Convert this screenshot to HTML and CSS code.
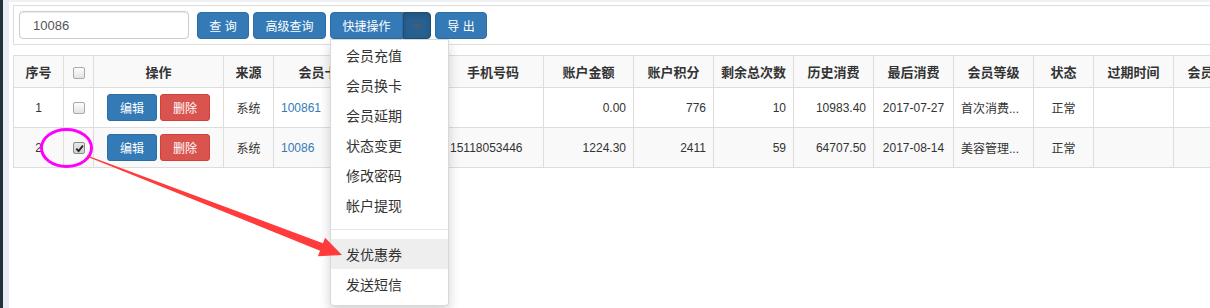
FILE: index.html
```html
<!DOCTYPE html>
<html lang="zh-CN">
<head>
<meta charset="utf-8">
<title>会员列表</title>
<link rel="stylesheet" href="styles.css">
</head>
<body>
<div class="app">
  <div class="rail"></div>
  <div class="gutter"></div>
  <div class="main">
    <div class="toolbar">
      <input class="search" type="text" value="10086">
      <button class="btn btn-primary w52">查&nbsp;询</button>
      <button class="btn btn-primary w73">高级查询</button>
      <div class="btn-group">
        <button class="btn btn-primary w73 left">快捷操作</button>
        <button class="btn btn-primary caret-btn"><span class="caret"></span></button>
        <ul class="dropdown">
          <li>会员充值</li>
          <li>会员换卡</li>
          <li>会员延期</li>
          <li>状态变更</li>
          <li>修改密码</li>
          <li>帐户提现</li>
          <li class="divider"></li>
          <li class="hover">发优惠券</li>
          <li>发送短信</li>
        </ul>
      </div>
      <button class="btn btn-primary w52">导&nbsp;出</button>
    </div>
    <table class="grid">
      <colgroup>
        <col class="c50"><col class="c30"><col class="c130"><col class="c50"><col class="c102"><col class="c67"><col class="c101"><col class="c90"><col class="c80"><col class="c80"><col class="c80"><col class="c80"><col class="c80"><col class="c60"><col class="c80"><col class="c80">
      </colgroup>
      <thead>
        <tr class="head">
          <th>序号</th>
          <th><span class="cb"></span></th>
          <th>操作</th>
          <th>来源</th>
          <th>会员卡号</th>
          <th></th>
          <th>手机号码</th>
          <th>账户金额</th>
          <th>账户积分</th>
          <th>剩余总次数</th>
          <th>历史消费</th>
          <th>最后消费</th>
          <th>会员等级</th>
          <th>状态</th>
          <th>过期时间</th>
          <th>会员备注</th>
        </tr>
      </thead>
      <tbody>
        <tr class="row">
          <td class="ctr">1</td>
          <td class="ctr"><span class="cb"></span></td>
          <td class="ctr"><span class="ops"><button class="sbtn btn-primary">编辑</button><button class="sbtn btn-danger">删除</button></span></td>
          <td class="ctr">系统</td>
          <td><span class="link">100861</span></td>
          <td></td>
          <td></td>
          <td class="num">0.00</td>
          <td class="num">776</td>
          <td class="num">10</td>
          <td class="num">10983.40</td>
          <td class="ctr">2017-07-27</td>
          <td>首次消费...</td>
          <td class="ctr">正常</td>
          <td></td>
          <td></td>
        </tr>
        <tr class="row alt">
          <td class="ctr">2</td>
          <td class="ctr"><span class="cb checked"><svg viewBox="0 0 10 10" width="9" height="9"><path d="M1.5 5.2 L4 7.8 L8.8 1.8" fill="none" stroke="#222" stroke-width="2"/></svg></span></td>
          <td class="ctr"><span class="ops"><button class="sbtn btn-primary">编辑</button><button class="sbtn btn-danger">删除</button></span></td>
          <td class="ctr">系统</td>
          <td><span class="link">10086</span></td>
          <td></td>
          <td>15118053446</td>
          <td class="num">1224.30</td>
          <td class="num">2411</td>
          <td class="num">59</td>
          <td class="num">64707.50</td>
          <td class="ctr">2017-08-14</td>
          <td>美容管理...</td>
          <td class="ctr">正常</td>
          <td></td>
          <td></td>
        </tr>
      </tbody>
    </table>
  </div>
  <svg class="annot" width="1210" height="308" viewBox="0 0 1210 308">
    <ellipse cx="66.5" cy="148" rx="25" ry="18.5" fill="none" stroke="#ff00ff" stroke-width="3"/>
    <polygon fill="#ff3b3b" points="86.8,156.6 320.05,250.7 317.9,256.3 342,255 325.1,237.7 322.95,243.3 87.2,155.4"/>
  </svg>
</div>
</body>
</html>
```

FILE: styles.css
```css
* { box-sizing: border-box; }
html, body { margin: 0; padding: 0; }
body {
  width: 1210px;
  height: 308px;
  overflow: hidden;
  background: #fff;
  font-family: "Liberation Sans", "Noto Sans CJK SC", sans-serif;
  font-size: 12px;
  color: #333;
}
.app {
  position: relative;
  display: flex;
  width: 1210px;
  height: 308px;
}
.rail { width: 3px; background: #22313a; flex: none; }
.gutter { width: 6px; background: #e9edf3; flex: none; }
.main {
  flex: 1;
  min-width: 0;
  overflow: hidden;
  border-top: 2px solid #eef1f6;
  padding-left: 4px;
  padding-top: 3px;
}
.toolbar {
  display: flex;
  align-items: center;
  gap: 4px;
  height: 40px;
  border: 1px solid #ddd;
  border-right: none;
  padding: 0 0 0 5px;
}
.search {
  width: 170px;
  height: 28px;
  margin: 0 4px 0 0;
  border: 1px solid #ccc;
  border-radius: 4px;
  padding: 0 13px;
  font-family: "Liberation Sans", sans-serif;
  font-size: 13px;
  color: #555;
  box-shadow: inset 0 1px 1px rgba(0,0,0,.075);
  outline: none;
}
.btn {
  height: 27px;
  border: 1px solid #2e6da4;
  border-radius: 4px;
  padding: 0;
  font-family: "Liberation Sans", "Noto Sans CJK SC", sans-serif;
  font-size: 12px;
  color: #fff;
  text-align: center;
  cursor: pointer;
}
.btn-primary { background: #337ab7; }
.w52 { width: 52px; }
.w73 { width: 73px; }
.btn-group { position: relative; display: flex; }
.btn-group .left { border-top-right-radius: 0; border-bottom-right-radius: 0; }
.caret-btn {
  width: 28px;
  border-top-left-radius: 0;
  border-bottom-left-radius: 0;
  background: #286090;
  border-color: #204d74;
  box-shadow: inset 0 3px 5px rgba(0,0,0,.125);
  display: flex;
  align-items: center;
  justify-content: center;
}
.caret {
  display: block;
  width: 0;
  height: 0;
  border-top: 4px solid #5a5a5a;
  border-left: 4px solid transparent;
  border-right: 4px solid transparent;
  margin-top: 1px;
}
.dropdown {
  position: absolute;
  left: 0;
  top: 100%;
  z-index: 10;
  width: 119px;
  margin: 0;
  padding: 0 0 6px;
  list-style: none;
  background: #fff;
  border: 1px solid rgba(0,0,0,.15);
  border-radius: 0 0 4px 4px;
  box-shadow: 0 6px 12px rgba(0,0,0,.175);
  font-family: "Noto Sans CJK SC", sans-serif;
  font-size: 14px;
}
.dropdown li {
  height: 30px;
  line-height: 30px;
  padding: 0 15px;
  color: #333;
  white-space: nowrap;
}
.dropdown li.divider {
  height: 1px;
  margin: 9px 0;
  padding: 0;
  background: #e5e5e5;
}
.dropdown li.hover { background: #eee; }

.grid {
  margin-top: 10px;
  border-collapse: collapse;
  table-layout: fixed;
  width: 1240px;
}
.c30 { width: 30px; } .c50 { width: 50px; } .c60 { width: 60px; } .c67 { width: 67px; }
.c80 { width: 80px; } .c90 { width: 90px; } .c101 { width: 101px; }
.c102 { width: 102px; } .c130 { width: 130px; }
.grid th, .grid td {
  border: 1px solid #ddd;
  padding: 0 7px;
  white-space: nowrap;
  overflow: hidden;
  vertical-align: middle;
}
.grid th {
  font-size: 13px;
  font-weight: bold;
  text-align: center;
  background: #f9f9f9;
  color: #333;
}
.head { height: 32px; }
.row { height: 40px; }
.row td { background: #fff; }
.row.alt td { background: #f9f9f9; }
.ctr { text-align: center; }
.num { text-align: right; }
.link { color: #337ab7; }
.cb {
  display: inline-block;
  width: 12px;
  height: 12px;
  border: 1px solid #a9a9a9;
  border-radius: 2px;
  background: linear-gradient(#fdfdfd, #e3e3e3);
  vertical-align: middle;
  position: relative;
}
.cb.checked {
  background: linear-gradient(#e8e8e8, #d0d0d0);
  border-color: #8c8c8c;
}
.cb svg { position: absolute; left: 1px; top: 1px; }
.ops { display: inline-flex; gap: 3px; vertical-align: middle; }
.sbtn {
  width: 50px;
  height: 27px;
  padding: 0;
  border-radius: 3px;
  font-family: "Noto Sans CJK SC", sans-serif;
  font-size: 12px;
  color: #fff;
  border: 1px solid #2e6da4;
}
.btn-danger { background: #d9534f; border-color: #d43f3a; }
.annot {
  position: absolute;
  left: 0;
  top: 0;
  z-index: 20;
  pointer-events: none;
}
```
